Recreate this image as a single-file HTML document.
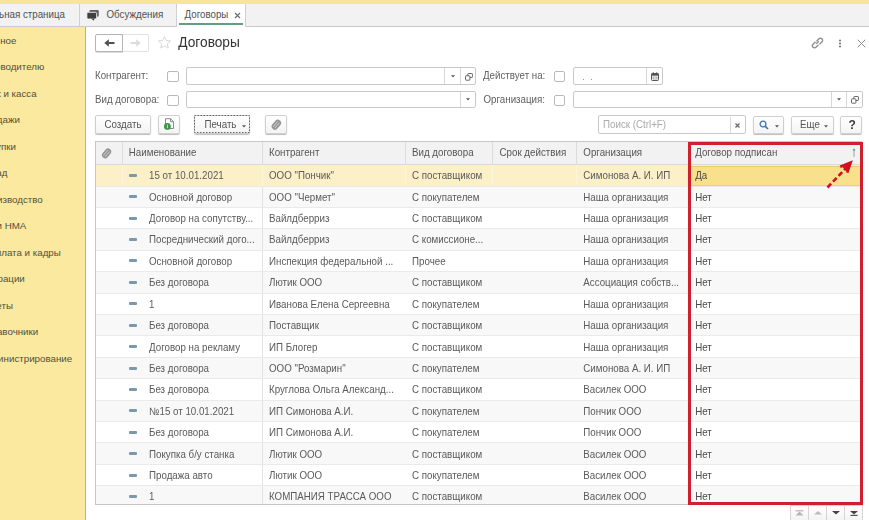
<!DOCTYPE html><html><head><meta charset="utf-8"><style>
html,body{margin:0;padding:0;}
body{width:869px;height:520px;overflow:hidden;position:relative;background:#fff;font-family:"Liberation Sans",sans-serif;font-size:9.75px;}
.t{position:absolute;white-space:nowrap;line-height:11px;transform:scaleY(1.1);transform-origin:0 9px;}
.r{position:absolute;box-sizing:border-box;}
svg{position:absolute;overflow:visible;}
</style></head><body><div style="position:absolute;left:0;top:0;width:869px;height:520px;overflow:hidden;filter:blur(0.3px)">
<div class="r" style="left:0px;top:0px;width:869px;height:4px;background:#f7e59c;"></div>
<div class="r" style="left:0px;top:3.5px;width:869px;height:23px;background:#f2f2f2;border-bottom:1px solid #c9c9c9;"></div>
<div class="r" style="left:78.5px;top:3.5px;width:1px;height:23px;background:#d0d0d0;"></div>
<div class="t" style="left:-29.4px;top:9.18px;color:#505050;font-size:9.75px;line-height:11px;">Начальная страница</div>
<svg style="left:86px;top:9px" width="14" height="13" viewBox="0 0 14 13">
<rect x="3.4" y="0.9" width="9.3" height="6.8" rx="1.3" fill="#5c5c5c"/>
<rect x="0.9" y="3.3" width="9.7" height="6.7" rx="1.3" fill="#404040" stroke="#f2f2f2" stroke-width="0.9"/>
<path d="M5.2 9.6 L8.6 9.6 L7.6 11.8 Z" fill="#404040"/>
</svg><div class="t" style="left:106.5px;top:9.18px;color:#505050;font-size:9.75px;line-height:11px;">Обсуждения</div>
<div class="r" style="left:176px;top:3.5px;width:70px;height:23px;background:#fff;border-left:1px solid #d0d0d0;border-right:1px solid #d0d0d0;"></div>
<div class="r" style="left:179px;top:23px;width:64px;height:2px;background:#5f9e80;"></div>
<div class="t" style="left:184.5px;top:9.18px;color:#505050;font-size:9.75px;line-height:11px;">Договоры</div>
<svg style="left:234px;top:12px" width="7" height="7" viewBox="0 0 7 7"><path d="M1 1L6 6M6 1L1 6" stroke="#6a6a6a" stroke-width="1.1"/></svg><div class="r" style="left:0px;top:26.5px;width:86px;height:494px;background:#fbe9a0;border-right:1px solid #b4b09a;"></div>
<div class="t" style="left:-20.8px;top:34.88px;color:#545036;font-size:9.75px;line-height:11px;transform:none;">Главное</div>
<div class="t" style="left:-20.8px;top:61.38px;color:#545036;font-size:9.75px;line-height:11px;transform:none;">Руководителю</div>
<div class="t" style="left:-20.8px;top:87.88px;color:#545036;font-size:9.75px;line-height:11px;transform:none;">Банк и касса</div>
<div class="t" style="left:-20.8px;top:114.38px;color:#545036;font-size:9.75px;line-height:11px;transform:none;">Продажи</div>
<div class="t" style="left:-20.8px;top:140.88px;color:#545036;font-size:9.75px;line-height:11px;transform:none;">Покупки</div>
<div class="t" style="left:-20.8px;top:167.38px;color:#545036;font-size:9.75px;line-height:11px;transform:none;">Склад</div>
<div class="t" style="left:-20.8px;top:193.88px;color:#545036;font-size:9.75px;line-height:11px;transform:none;">Производство</div>
<div class="t" style="left:-20.8px;top:220.38px;color:#545036;font-size:9.75px;line-height:11px;transform:none;">ОС и НМА</div>
<div class="t" style="left:-20.8px;top:246.88px;color:#545036;font-size:9.75px;line-height:11px;transform:none;">Зарплата и кадры</div>
<div class="t" style="left:-20.8px;top:273.38px;color:#545036;font-size:9.75px;line-height:11px;transform:none;">Операции</div>
<div class="t" style="left:-20.8px;top:299.88px;color:#545036;font-size:9.75px;line-height:11px;transform:none;">Отчеты</div>
<div class="t" style="left:-20.8px;top:326.38px;color:#545036;font-size:9.75px;line-height:11px;transform:none;">Справочники</div>
<div class="t" style="left:-20.8px;top:352.88px;color:#545036;font-size:9.75px;line-height:11px;transform:none;">Администрирование</div>
<div class="r" style="left:122px;top:34px;width:27px;height:18px;background:#fff;border:1px solid #e2e2e2;border-left:none;border-radius:0 2px 2px 0;"></div>
<div class="r" style="left:95px;top:34px;width:28px;height:18px;background:#fff;border:1px solid #b4b4b4;border-radius:2px 0 0 2px;box-shadow:0 1px 0 #ddd;"></div>
<svg style="left:103.5px;top:39px" width="11" height="8" viewBox="0 0 11 8"><path d="M4.2 4H10.5" stroke="#505050" stroke-width="2"/><path d="M0.3 4L4.8 0.3V7.7Z" fill="#505050"/></svg><svg style="left:129.5px;top:39px" width="11" height="8" viewBox="0 0 11 8"><path d="M0.5 4H6.8" stroke="#dcdcdc" stroke-width="2"/><path d="M10.7 4L6.2 0.3V7.7Z" fill="#dcdcdc"/></svg><svg style="left:157px;top:35px" width="15" height="15" viewBox="0 0 24 24"><path d="M12 2.5l2.9 6.3 6.9.7-5.2 4.6 1.5 6.8L12 17.4l-6.1 3.5 1.5-6.8L2.2 9.5l6.9-.7z" fill="none" stroke="#d8d8d8" stroke-width="1.6"/></svg><div class="t" style="left:178.3px;top:35px;color:#333;font-size:13.7px;line-height:16px;transform:scaleY(1.1);transform-origin:0 12.5px">Договоры</div>
<svg style="left:810px;top:36px" width="15" height="14" viewBox="0 0 15 14"><g fill="none" stroke="#8a8a8a" stroke-width="1.25"><path d="M6.2 7.8 L8.8 5.2"/><path d="M5.5 5.8 L3 8.3 a2.1 2.1 0 0 0 3 3 L8.5 8.8"/><path d="M9.5 8.2 L12 5.7 a2.1 2.1 0 0 0 -3 -3 L6.5 5.2"/></g></svg><svg style="left:836.5px;top:38.5px" width="6" height="9" viewBox="0 0 6 9"><circle cx="3" cy="1.5" r="0.95" fill="#6a6a6a"/><circle cx="3" cy="4.5" r="0.95" fill="#6a6a6a"/><circle cx="3" cy="7.5" r="0.95" fill="#6a6a6a"/></svg><svg style="left:857px;top:38.5px" width="9" height="9" viewBox="0 0 9 9"><path d="M0.7 0.7L8.3 8.3M8.3 0.7L0.7 8.3" stroke="#8a8a8a" stroke-width="1"/></svg><div class="t" style="left:95px;top:70.48px;color:#606060;font-size:9.75px;line-height:11px;">Контрагент:</div>
<div class="r" style="left:167px;top:71px;width:11.5px;height:11px;border:1px solid #b9b9b9;border-radius:2px;background:#fff;"></div>
<div class="r" style="left:186px;top:67px;width:290px;height:18px;border:1px solid #c9c9c9;border-radius:2px;background:#fff;"></div>
<div class="r" style="left:444px;top:68px;width:1px;height:16px;background:#d6d6d6;"></div>
<div class="r" style="left:460px;top:68px;width:1px;height:16px;background:#d6d6d6;"></div>
<svg style="left:450.5px;top:75px" width="4" height="3" viewBox="0 0 4 3"><path d="M0 0.3H4L2 2.6Z" fill="#555"/></svg><svg style="left:465px;top:72.5px" width="8" height="8" viewBox="0 0 8 8"><rect x="2.8" y="0.5" width="4.6" height="4" rx="0.6" fill="none" stroke="#666" stroke-width="1"/><rect x="0.5" y="2.8" width="4.4" height="4.4" rx="0.6" fill="#fff" stroke="#666" stroke-width="1"/></svg><div class="t" style="left:483px;top:70.48px;color:#606060;font-size:9.75px;line-height:11px;">Действует на:</div>
<div class="r" style="left:553.5px;top:71px;width:11.5px;height:11px;border:1px solid #b9b9b9;border-radius:2px;background:#fff;"></div>
<div class="r" style="left:573px;top:67px;width:90px;height:18px;border:1px solid #c9c9c9;border-radius:2px;background:#fff;"></div>
<div class="r" style="left:646px;top:68px;width:1px;height:16px;background:#d6d6d6;"></div>
<div class="r" style="left:582.5px;top:78.5px;width:1.2px;height:1.2px;background:#999;"></div>
<div class="r" style="left:591px;top:78.5px;width:1.2px;height:1.2px;background:#999;"></div>
<svg style="left:651px;top:72px" width="8" height="9" viewBox="0 0 8 9"><rect x="0.5" y="1.5" width="7" height="7" rx="0.8" fill="#fff" stroke="#555" stroke-width="1"/><rect x="0.5" y="1.5" width="7" height="2.2" fill="#555"/><path d="M2.3 0.3V2M5.7 0.3V2" stroke="#555" stroke-width="1"/><rect x="2" y="5" width="4" height="2" fill="none" stroke="#888" stroke-width="0.7"/></svg><div class="t" style="left:95px;top:94.08px;color:#606060;font-size:9.75px;line-height:11px;">Вид договора:</div>
<div class="r" style="left:167px;top:94.5px;width:11.5px;height:11px;border:1px solid #b9b9b9;border-radius:2px;background:#fff;"></div>
<div class="r" style="left:186px;top:91px;width:290px;height:17px;border:1px solid #c9c9c9;border-radius:2px;background:#fff;"></div>
<div class="r" style="left:460px;top:92px;width:1px;height:15px;background:#d6d6d6;"></div>
<svg style="left:465.5px;top:98px" width="4" height="3" viewBox="0 0 4 3"><path d="M0 0.3H4L2 2.6Z" fill="#555"/></svg><div class="t" style="left:483.5px;top:94.08px;color:#606060;font-size:9.75px;line-height:11px;">Организация:</div>
<div class="r" style="left:553.5px;top:94.5px;width:11.5px;height:11px;border:1px solid #b9b9b9;border-radius:2px;background:#fff;"></div>
<div class="r" style="left:573px;top:91px;width:290px;height:17px;border:1px solid #c9c9c9;border-radius:2px;background:#fff;"></div>
<div class="r" style="left:831px;top:92px;width:1px;height:15px;background:#d6d6d6;"></div>
<div class="r" style="left:846px;top:92px;width:1px;height:15px;background:#d6d6d6;"></div>
<svg style="left:837.0px;top:98px" width="4" height="3" viewBox="0 0 4 3"><path d="M0 0.3H4L2 2.6Z" fill="#555"/></svg><svg style="left:851px;top:95.5px" width="8" height="8" viewBox="0 0 8 8"><rect x="2.8" y="0.5" width="4.6" height="4" rx="0.6" fill="none" stroke="#666" stroke-width="1"/><rect x="0.5" y="2.8" width="4.4" height="4.4" rx="0.6" fill="#fff" stroke="#666" stroke-width="1"/></svg><div class="r" style="left:95px;top:115px;width:56px;height:18.5px;border:1px solid #cfcfcf;border-radius:2px;background:linear-gradient(#fff,#f4f4f4);box-shadow:0 1px 1px #bdbdbd;"></div>
<div class="t" style="left:104.5px;top:119.28px;color:#555;font-size:9.75px;line-height:11px;">Создать</div>
<div class="r" style="left:158px;top:115px;width:22px;height:18.5px;border:1px solid #cfcfcf;border-radius:2px;background:linear-gradient(#fff,#f4f4f4);box-shadow:0 1px 1px #bdbdbd;"></div>
<svg style="left:164px;top:118px" width="11" height="12" viewBox="0 0 11 12"><path d="M1.5 0.7H6.5L9.5 3.7V10.5H1.5Z" fill="#fff" stroke="#8a8a8a" stroke-width="1"/><path d="M6.5 0.7V3.7H9.5" fill="none" stroke="#8a8a8a" stroke-width="1"/><circle cx="3.4" cy="8.4" r="3.4" fill="#3c9447"/><path d="M3.4 6.6V10.2" stroke="#b8e6b0" stroke-width="1"/></svg><div class="r" style="left:194px;top:115px;width:56px;height:18.5px;border:1px solid #cfcfcf;border-radius:2px;background:linear-gradient(#fff,#f4f4f4);box-shadow:0 1px 1px #bdbdbd;"></div>
<svg style="left:194px;top:115px" width="56" height="18" viewBox="0 0 56 18"><rect x="0.5" y="0.5" width="55" height="17" fill="none" stroke="#666" stroke-width="1" stroke-dasharray="1.6 1.4"/></svg><div class="t" style="left:204.5px;top:119.28px;color:#555;font-size:9.75px;line-height:11px;">Печать</div>
<svg style="left:241.5px;top:125px" width="4" height="3" viewBox="0 0 4 3"><path d="M0 0.3H4L2 2.6Z" fill="#555"/></svg><div class="r" style="left:265px;top:115px;width:22px;height:18.5px;border:1px solid #cfcfcf;border-radius:2px;background:linear-gradient(#fff,#f4f4f4);box-shadow:0 1px 1px #bdbdbd;"></div>
<svg style="left:270px;top:117.5px" width="14" height="13" viewBox="0 0 14 13"><g transform="translate(6.3 6.8) rotate(40)"><rect x="-3.3" y="-5.6" width="6.6" height="11" rx="3.3" fill="#959595"/><path d="M-1.1 -3.6 V3.6 M1.1 -3.6 V3.6" stroke="#dcdcdc" stroke-width="0.8"/></g></svg><div class="r" style="left:598px;top:115px;width:148px;height:19px;border:1px solid #c9c9c9;border-radius:2px;background:#fff;"></div>
<div class="r" style="left:730px;top:116.5px;width:1px;height:16px;background:#dadada;"></div>
<div class="t" style="left:603px;top:119.28px;color:#aaa;font-size:9.75px;line-height:11px;">Поиск (Ctrl+F)</div>
<svg style="left:735.3px;top:123.3px" width="5" height="5" viewBox="0 0 5 5"><path d="M0.5 0.5L4.5 4.5M4.5 0.5L0.5 4.5" stroke="#666" stroke-width="1.2"/></svg><div class="r" style="left:753px;top:115.5px;width:31px;height:18px;border:1px solid #cfcfcf;border-radius:2px;background:linear-gradient(#fff,#f4f4f4);box-shadow:0 1px 1px #bdbdbd;"></div>
<svg style="left:758.5px;top:120px" width="10" height="10" viewBox="0 0 10 10"><circle cx="4" cy="4" r="2.9" fill="none" stroke="#3a78b5" stroke-width="1.3"/><path d="M6.1 6.1L9 9" stroke="#3a78b5" stroke-width="1.7"/></svg><svg style="left:774.5px;top:125px" width="4" height="3" viewBox="0 0 4 3"><path d="M0 0.3H4L2 2.6Z" fill="#555"/></svg><div class="r" style="left:790.5px;top:115.5px;width:43.5px;height:18px;border:1px solid #cfcfcf;border-radius:2px;background:linear-gradient(#fff,#f4f4f4);box-shadow:0 1px 1px #bdbdbd;"></div>
<div class="t" style="left:800px;top:119.28px;color:#555;font-size:9.75px;line-height:11px;">Еще</div>
<svg style="left:823.5px;top:125px" width="4" height="3" viewBox="0 0 4 3"><path d="M0 0.3H4L2 2.6Z" fill="#555"/></svg><div class="r" style="left:840px;top:115.5px;width:22px;height:18px;border:1px solid #cfcfcf;border-radius:2px;background:linear-gradient(#fff,#f4f4f4);box-shadow:0 1px 1px #bdbdbd;"></div>
<div class="t" style="left:848.5px;top:117.94px;color:#3a3a3a;font-size:12px;line-height:normal;transform:none;font-weight:bold;">?</div>
<div class="r" style="left:95px;top:141px;width:767px;height:364px;border:1px solid #c6c6c6;background:#fff;"></div>
<div class="r" style="left:96px;top:142px;width:765px;height:23.150000000000006px;background:#f2f2f2;border-bottom:1px solid #d9d9d9;"></div>
<div class="r" style="left:122px;top:142px;width:1px;height:22.150000000000006px;background:#dcdcdc;"></div>
<div class="r" style="left:262px;top:142px;width:1px;height:22.150000000000006px;background:#dcdcdc;"></div>
<div class="r" style="left:405px;top:142px;width:1px;height:22.150000000000006px;background:#dcdcdc;"></div>
<div class="r" style="left:492px;top:142px;width:1px;height:22.150000000000006px;background:#dcdcdc;"></div>
<div class="r" style="left:576px;top:142px;width:1px;height:22.150000000000006px;background:#dcdcdc;"></div>
<svg style="left:99.5px;top:146.5px" width="14" height="13" viewBox="0 0 14 13"><g transform="translate(6.5 6.5) rotate(40)"><rect x="-3.2" y="-5.5" width="6.4" height="10.8" rx="3.2" fill="#959595"/><path d="M-1.1 -3.5 V3.5 M1.1 -3.5 V3.5" stroke="#d8d8d8" stroke-width="0.8"/></g></svg><div class="t" style="left:128.8px;top:147.28px;color:#555;font-size:9.75px;line-height:11px;">Наименование</div>
<div class="t" style="left:269px;top:147.28px;color:#555;font-size:9.75px;line-height:11px;">Контрагент</div>
<div class="t" style="left:412px;top:147.28px;color:#555;font-size:9.75px;line-height:11px;">Вид договора</div>
<div class="t" style="left:499.5px;top:147.28px;color:#555;font-size:9.75px;line-height:11px;">Срок действия</div>
<div class="t" style="left:583.3px;top:147.28px;color:#555;font-size:9.75px;line-height:11px;">Организация</div>
<div class="t" style="left:695.2px;top:147.28px;color:#555;font-size:9.75px;line-height:11px;">Договор подписан</div>
<svg style="left:851.5px;top:148px" width="4" height="10" viewBox="0 0 4 10"><path d="M2 1.5V9" fill="none" stroke="#999" stroke-width="0.9"/><path d="M2 0.3L3.6 2.6H0.4Z" fill="#888"/></svg><div class="r" style="left:96px;top:165.15px;width:765px;height:20.91px;background:#fcf0c8;"></div>
<div class="r" style="left:122px;top:165.15px;width:1px;height:20.41px;background:#fdf5da;"></div>
<div class="r" style="left:262px;top:165.15px;width:1px;height:20.41px;background:#fdf5da;"></div>
<div class="r" style="left:405px;top:165.15px;width:1px;height:20.41px;background:#fdf5da;"></div>
<div class="r" style="left:492px;top:165.15px;width:1px;height:20.41px;background:#fdf5da;"></div>
<div class="r" style="left:576px;top:165.15px;width:1px;height:20.41px;background:#fdf5da;"></div>
<div class="r" style="left:691px;top:165.95000000000002px;width:170px;height:20.01px;background:#f9e08d;border-top:1.5px solid #e9cc66;border-bottom:1.2px solid #e8d27a;"></div>
<div class="r" style="left:129px;top:173.85px;width:8px;height:3px;background:#7d98ab;border-radius:1px;"></div>
<div class="t" style="left:149px;top:170.23px;color:#5a5a5a;font-size:9.75px;line-height:11px;">15 от 10.01.2021</div>
<div class="t" style="left:269px;top:170.23px;color:#5a5a5a;font-size:9.75px;line-height:11px;">ООО "Пончик"</div>
<div class="t" style="left:412px;top:170.23px;color:#5a5a5a;font-size:9.75px;line-height:11px;">С поставщиком</div>
<div class="t" style="left:583.3px;top:170.23px;color:#5a5a5a;font-size:9.75px;line-height:11px;">Симонова А. И. ИП</div>
<div class="t" style="left:695.2px;top:170.23px;color:#4a4a4a;font-size:9.75px;line-height:11px;">Да</div>
<div class="r" style="left:96px;top:185.56px;width:765px;height:21.41px;background:#f8f8f8;border-top:1px solid #eaeaea;"></div>
<div class="r" style="left:262px;top:186.56px;width:1px;height:20.41px;background:#e2e2e2;"></div>
<div class="r" style="left:129px;top:195.26px;width:8px;height:3px;background:#7d98ab;border-radius:1px;"></div>
<div class="t" style="left:149px;top:191.64px;color:#5a5a5a;font-size:9.75px;line-height:11px;">Основной договор</div>
<div class="t" style="left:269px;top:191.64px;color:#5a5a5a;font-size:9.75px;line-height:11px;">ООО "Чермет"</div>
<div class="t" style="left:412px;top:191.64px;color:#5a5a5a;font-size:9.75px;line-height:11px;">С покупателем</div>
<div class="t" style="left:583.3px;top:191.64px;color:#5a5a5a;font-size:9.75px;line-height:11px;">Наша организация</div>
<div class="t" style="left:695.2px;top:191.64px;color:#4a4a4a;font-size:9.75px;line-height:11px;">Нет</div>
<div class="r" style="left:96px;top:206.97px;width:765px;height:21.41px;background:#ffffff;border-top:1px solid #eaeaea;"></div>
<div class="r" style="left:262px;top:207.97px;width:1px;height:20.41px;background:#e2e2e2;"></div>
<div class="r" style="left:129px;top:216.67px;width:8px;height:3px;background:#7d98ab;border-radius:1px;"></div>
<div class="t" style="left:149px;top:213.05px;color:#5a5a5a;font-size:9.75px;line-height:11px;">Договор на сопутству...</div>
<div class="t" style="left:269px;top:213.05px;color:#5a5a5a;font-size:9.75px;line-height:11px;">Вайлдберриз</div>
<div class="t" style="left:412px;top:213.05px;color:#5a5a5a;font-size:9.75px;line-height:11px;">С поставщиком</div>
<div class="t" style="left:583.3px;top:213.05px;color:#5a5a5a;font-size:9.75px;line-height:11px;">Наша организация</div>
<div class="t" style="left:695.2px;top:213.05px;color:#4a4a4a;font-size:9.75px;line-height:11px;">Нет</div>
<div class="r" style="left:96px;top:228.38px;width:765px;height:21.41px;background:#f8f8f8;border-top:1px solid #eaeaea;"></div>
<div class="r" style="left:262px;top:229.38px;width:1px;height:20.41px;background:#e2e2e2;"></div>
<div class="r" style="left:129px;top:238.07999999999998px;width:8px;height:3px;background:#7d98ab;border-radius:1px;"></div>
<div class="t" style="left:149px;top:234.46px;color:#5a5a5a;font-size:9.75px;line-height:11px;">Посреднический дого...</div>
<div class="t" style="left:269px;top:234.46px;color:#5a5a5a;font-size:9.75px;line-height:11px;">Вайлдберриз</div>
<div class="t" style="left:412px;top:234.46px;color:#5a5a5a;font-size:9.75px;line-height:11px;">С комиссионе...</div>
<div class="t" style="left:583.3px;top:234.46px;color:#5a5a5a;font-size:9.75px;line-height:11px;">Наша организация</div>
<div class="t" style="left:695.2px;top:234.46px;color:#4a4a4a;font-size:9.75px;line-height:11px;">Нет</div>
<div class="r" style="left:96px;top:249.79000000000002px;width:765px;height:21.41px;background:#ffffff;border-top:1px solid #eaeaea;"></div>
<div class="r" style="left:262px;top:250.79000000000002px;width:1px;height:20.41px;background:#e2e2e2;"></div>
<div class="r" style="left:129px;top:259.49px;width:8px;height:3px;background:#7d98ab;border-radius:1px;"></div>
<div class="t" style="left:149px;top:255.87px;color:#5a5a5a;font-size:9.75px;line-height:11px;">Основной договор</div>
<div class="t" style="left:269px;top:255.87px;color:#5a5a5a;font-size:9.75px;line-height:11px;">Инспекция федеральной ...</div>
<div class="t" style="left:412px;top:255.87px;color:#5a5a5a;font-size:9.75px;line-height:11px;">Прочее</div>
<div class="t" style="left:583.3px;top:255.87px;color:#5a5a5a;font-size:9.75px;line-height:11px;">Наша организация</div>
<div class="t" style="left:695.2px;top:255.87px;color:#4a4a4a;font-size:9.75px;line-height:11px;">Нет</div>
<div class="r" style="left:96px;top:271.2px;width:765px;height:21.41px;background:#f8f8f8;border-top:1px solid #eaeaea;"></div>
<div class="r" style="left:262px;top:272.2px;width:1px;height:20.41px;background:#e2e2e2;"></div>
<div class="r" style="left:129px;top:280.9px;width:8px;height:3px;background:#7d98ab;border-radius:1px;"></div>
<div class="t" style="left:149px;top:277.28px;color:#5a5a5a;font-size:9.75px;line-height:11px;">Без договора</div>
<div class="t" style="left:269px;top:277.28px;color:#5a5a5a;font-size:9.75px;line-height:11px;">Лютик ООО</div>
<div class="t" style="left:412px;top:277.28px;color:#5a5a5a;font-size:9.75px;line-height:11px;">С поставщиком</div>
<div class="t" style="left:583.3px;top:277.28px;color:#5a5a5a;font-size:9.75px;line-height:11px;">Ассоциация собств...</div>
<div class="t" style="left:695.2px;top:277.28px;color:#4a4a4a;font-size:9.75px;line-height:11px;">Нет</div>
<div class="r" style="left:96px;top:292.61px;width:765px;height:21.41px;background:#ffffff;border-top:1px solid #eaeaea;"></div>
<div class="r" style="left:262px;top:293.61px;width:1px;height:20.41px;background:#e2e2e2;"></div>
<div class="r" style="left:129px;top:302.31px;width:8px;height:3px;background:#7d98ab;border-radius:1px;"></div>
<div class="t" style="left:149px;top:298.69px;color:#5a5a5a;font-size:9.75px;line-height:11px;">1</div>
<div class="t" style="left:269px;top:298.69px;color:#5a5a5a;font-size:9.75px;line-height:11px;">Иванова Елена Сергеевна</div>
<div class="t" style="left:412px;top:298.69px;color:#5a5a5a;font-size:9.75px;line-height:11px;">С покупателем</div>
<div class="t" style="left:583.3px;top:298.69px;color:#5a5a5a;font-size:9.75px;line-height:11px;">Наша организация</div>
<div class="t" style="left:695.2px;top:298.69px;color:#4a4a4a;font-size:9.75px;line-height:11px;">Нет</div>
<div class="r" style="left:96px;top:314.02px;width:765px;height:21.41px;background:#f8f8f8;border-top:1px solid #eaeaea;"></div>
<div class="r" style="left:262px;top:315.02px;width:1px;height:20.41px;background:#e2e2e2;"></div>
<div class="r" style="left:129px;top:323.71999999999997px;width:8px;height:3px;background:#7d98ab;border-radius:1px;"></div>
<div class="t" style="left:149px;top:320.10px;color:#5a5a5a;font-size:9.75px;line-height:11px;">Без договора</div>
<div class="t" style="left:269px;top:320.10px;color:#5a5a5a;font-size:9.75px;line-height:11px;">Поставщик</div>
<div class="t" style="left:412px;top:320.10px;color:#5a5a5a;font-size:9.75px;line-height:11px;">С поставщиком</div>
<div class="t" style="left:583.3px;top:320.10px;color:#5a5a5a;font-size:9.75px;line-height:11px;">Наша организация</div>
<div class="t" style="left:695.2px;top:320.10px;color:#4a4a4a;font-size:9.75px;line-height:11px;">Нет</div>
<div class="r" style="left:96px;top:335.43px;width:765px;height:21.41px;background:#ffffff;border-top:1px solid #eaeaea;"></div>
<div class="r" style="left:262px;top:336.43px;width:1px;height:20.41px;background:#e2e2e2;"></div>
<div class="r" style="left:129px;top:345.13px;width:8px;height:3px;background:#7d98ab;border-radius:1px;"></div>
<div class="t" style="left:149px;top:341.51px;color:#5a5a5a;font-size:9.75px;line-height:11px;">Договор на рекламу</div>
<div class="t" style="left:269px;top:341.51px;color:#5a5a5a;font-size:9.75px;line-height:11px;">ИП Блогер</div>
<div class="t" style="left:412px;top:341.51px;color:#5a5a5a;font-size:9.75px;line-height:11px;">С поставщиком</div>
<div class="t" style="left:583.3px;top:341.51px;color:#5a5a5a;font-size:9.75px;line-height:11px;">Наша организация</div>
<div class="t" style="left:695.2px;top:341.51px;color:#4a4a4a;font-size:9.75px;line-height:11px;">Нет</div>
<div class="r" style="left:96px;top:356.84000000000003px;width:765px;height:21.41px;background:#f8f8f8;border-top:1px solid #eaeaea;"></div>
<div class="r" style="left:262px;top:357.84000000000003px;width:1px;height:20.41px;background:#e2e2e2;"></div>
<div class="r" style="left:129px;top:366.54px;width:8px;height:3px;background:#7d98ab;border-radius:1px;"></div>
<div class="t" style="left:149px;top:362.92px;color:#5a5a5a;font-size:9.75px;line-height:11px;">Без договора</div>
<div class="t" style="left:269px;top:362.92px;color:#5a5a5a;font-size:9.75px;line-height:11px;">ООО "Розмарин"</div>
<div class="t" style="left:412px;top:362.92px;color:#5a5a5a;font-size:9.75px;line-height:11px;">С покупателем</div>
<div class="t" style="left:583.3px;top:362.92px;color:#5a5a5a;font-size:9.75px;line-height:11px;">Симонова А. И. ИП</div>
<div class="t" style="left:695.2px;top:362.92px;color:#4a4a4a;font-size:9.75px;line-height:11px;">Нет</div>
<div class="r" style="left:96px;top:378.25px;width:765px;height:21.41px;background:#ffffff;border-top:1px solid #eaeaea;"></div>
<div class="r" style="left:262px;top:379.25px;width:1px;height:20.41px;background:#e2e2e2;"></div>
<div class="r" style="left:129px;top:387.95px;width:8px;height:3px;background:#7d98ab;border-radius:1px;"></div>
<div class="t" style="left:149px;top:384.33px;color:#5a5a5a;font-size:9.75px;line-height:11px;">Без договора</div>
<div class="t" style="left:269px;top:384.33px;color:#5a5a5a;font-size:9.75px;line-height:11px;">Круглова Ольга Александ...</div>
<div class="t" style="left:412px;top:384.33px;color:#5a5a5a;font-size:9.75px;line-height:11px;">С поставщиком</div>
<div class="t" style="left:583.3px;top:384.33px;color:#5a5a5a;font-size:9.75px;line-height:11px;">Василек ООО</div>
<div class="t" style="left:695.2px;top:384.33px;color:#4a4a4a;font-size:9.75px;line-height:11px;">Нет</div>
<div class="r" style="left:96px;top:399.65999999999997px;width:765px;height:21.41px;background:#f8f8f8;border-top:1px solid #eaeaea;"></div>
<div class="r" style="left:262px;top:400.65999999999997px;width:1px;height:20.41px;background:#e2e2e2;"></div>
<div class="r" style="left:129px;top:409.35999999999996px;width:8px;height:3px;background:#7d98ab;border-radius:1px;"></div>
<div class="t" style="left:149px;top:405.74px;color:#5a5a5a;font-size:9.75px;line-height:11px;">№15 от 10.01.2021</div>
<div class="t" style="left:269px;top:405.74px;color:#5a5a5a;font-size:9.75px;line-height:11px;">ИП Симонова А.И.</div>
<div class="t" style="left:412px;top:405.74px;color:#5a5a5a;font-size:9.75px;line-height:11px;">С покупателем</div>
<div class="t" style="left:583.3px;top:405.74px;color:#5a5a5a;font-size:9.75px;line-height:11px;">Пончик ООО</div>
<div class="t" style="left:695.2px;top:405.74px;color:#4a4a4a;font-size:9.75px;line-height:11px;">Нет</div>
<div class="r" style="left:96px;top:421.07000000000005px;width:765px;height:21.41px;background:#ffffff;border-top:1px solid #eaeaea;"></div>
<div class="r" style="left:262px;top:422.07000000000005px;width:1px;height:20.41px;background:#e2e2e2;"></div>
<div class="r" style="left:129px;top:430.77000000000004px;width:8px;height:3px;background:#7d98ab;border-radius:1px;"></div>
<div class="t" style="left:149px;top:427.15px;color:#5a5a5a;font-size:9.75px;line-height:11px;">Без договора</div>
<div class="t" style="left:269px;top:427.15px;color:#5a5a5a;font-size:9.75px;line-height:11px;">ИП Симонова А.И.</div>
<div class="t" style="left:412px;top:427.15px;color:#5a5a5a;font-size:9.75px;line-height:11px;">С покупателем</div>
<div class="t" style="left:583.3px;top:427.15px;color:#5a5a5a;font-size:9.75px;line-height:11px;">Пончик ООО</div>
<div class="t" style="left:695.2px;top:427.15px;color:#4a4a4a;font-size:9.75px;line-height:11px;">Нет</div>
<div class="r" style="left:96px;top:442.48px;width:765px;height:21.41px;background:#f8f8f8;border-top:1px solid #eaeaea;"></div>
<div class="r" style="left:262px;top:443.48px;width:1px;height:20.41px;background:#e2e2e2;"></div>
<div class="r" style="left:129px;top:452.18px;width:8px;height:3px;background:#7d98ab;border-radius:1px;"></div>
<div class="t" style="left:149px;top:448.56px;color:#5a5a5a;font-size:9.75px;line-height:11px;">Покупка б/у станка</div>
<div class="t" style="left:269px;top:448.56px;color:#5a5a5a;font-size:9.75px;line-height:11px;">Лютик ООО</div>
<div class="t" style="left:412px;top:448.56px;color:#5a5a5a;font-size:9.75px;line-height:11px;">С поставщиком</div>
<div class="t" style="left:583.3px;top:448.56px;color:#5a5a5a;font-size:9.75px;line-height:11px;">Василек ООО</div>
<div class="t" style="left:695.2px;top:448.56px;color:#4a4a4a;font-size:9.75px;line-height:11px;">Нет</div>
<div class="r" style="left:96px;top:463.89px;width:765px;height:21.41px;background:#ffffff;border-top:1px solid #eaeaea;"></div>
<div class="r" style="left:262px;top:464.89px;width:1px;height:20.41px;background:#e2e2e2;"></div>
<div class="r" style="left:129px;top:473.59px;width:8px;height:3px;background:#7d98ab;border-radius:1px;"></div>
<div class="t" style="left:149px;top:469.97px;color:#5a5a5a;font-size:9.75px;line-height:11px;">Продажа авто</div>
<div class="t" style="left:269px;top:469.97px;color:#5a5a5a;font-size:9.75px;line-height:11px;">Лютик ООО</div>
<div class="t" style="left:412px;top:469.97px;color:#5a5a5a;font-size:9.75px;line-height:11px;">С покупателем</div>
<div class="t" style="left:583.3px;top:469.97px;color:#5a5a5a;font-size:9.75px;line-height:11px;">Василек ООО</div>
<div class="t" style="left:695.2px;top:469.97px;color:#4a4a4a;font-size:9.75px;line-height:11px;">Нет</div>
<div class="r" style="left:96px;top:485.29999999999995px;width:765px;height:21.41px;background:#f8f8f8;border-top:1px solid #eaeaea;"></div>
<div class="r" style="left:262px;top:486.29999999999995px;width:1px;height:20.41px;background:#e2e2e2;"></div>
<div class="r" style="left:129px;top:494.99999999999994px;width:8px;height:3px;background:#7d98ab;border-radius:1px;"></div>
<div class="t" style="left:149px;top:491.38px;color:#5a5a5a;font-size:9.75px;line-height:11px;">1</div>
<div class="t" style="left:269px;top:491.38px;color:#5a5a5a;font-size:9.75px;line-height:11px;">КОМПАНИЯ ТРАССА ООО</div>
<div class="t" style="left:412px;top:491.38px;color:#5a5a5a;font-size:9.75px;line-height:11px;">С поставщиком</div>
<div class="t" style="left:583.3px;top:491.38px;color:#5a5a5a;font-size:9.75px;line-height:11px;">Василек ООО</div>
<div class="t" style="left:695.2px;top:491.38px;color:#4a4a4a;font-size:9.75px;line-height:11px;">Нет</div>
<div class="r" style="left:95px;top:504px;width:767px;height:1px;background:#c6c6c6;"></div>
<div class="r" style="left:94px;top:505px;width:775px;height:15px;background:#fff;"></div>
<div class="r" style="left:688px;top:142px;width:174.8px;height:363px;border:3px solid #d0202e;"></div>
<svg style="left:820px;top:155px" width="40" height="40" viewBox="0 0 40 40"><path d="M7.5 32.5 L28.5 10.5" stroke="#d2101f" stroke-width="2.6" stroke-dasharray="5.2 2.8" fill="none"/><path d="M20.2 11.8 L30.6 7.6 L27.2 17.6" stroke="#d2101f" stroke-width="2.7" fill="none" stroke-linejoin="miter" stroke-miterlimit="4"/><path d="M30.6 7.6 L22.5 12.3 L27 16.5 Z" fill="#d2101f"/></svg><div class="r" style="left:790px;top:504.5px;width:18.5px;height:17px;border:1px solid #d6d6d6;background:linear-gradient(#fff,#f3f3f3);"></div>
<div class="r" style="left:808px;top:504.5px;width:18.5px;height:17px;border:1px solid #d6d6d6;background:linear-gradient(#fff,#f3f3f3);"></div>
<div class="r" style="left:826px;top:504.5px;width:18.5px;height:17px;border:1px solid #d6d6d6;background:linear-gradient(#fff,#f3f3f3);"></div>
<div class="r" style="left:844px;top:504.5px;width:18.5px;height:17px;border:1px solid #d6d6d6;background:linear-gradient(#fff,#f3f3f3);"></div>
<svg style="left:795px;top:509.5px" width="9" height="6" viewBox="0 0 9 6"><path d="M0.5 0.8H8.5" stroke="#b5b5b5" stroke-width="1.2"/><path d="M4.5 1.6L8.5 5.6H0.5Z" fill="#b5b5b5"/></svg><svg style="left:813.5px;top:511px" width="8" height="4" viewBox="0 0 8 4"><path d="M4 0L8 3.6H0Z" fill="#bbb"/></svg><svg style="left:832px;top:510.5px" width="8" height="4" viewBox="0 0 8 4"><path d="M4 3.6L8 0H0Z" fill="#444"/></svg><svg style="left:849.5px;top:510.5px" width="8" height="5" viewBox="0 0 8 5"><path d="M0 0H8L4 3.6Z" fill="#444"/><path d="M0.5 4.4H7.5" stroke="#444" stroke-width="1.1"/></svg></div></body></html>
